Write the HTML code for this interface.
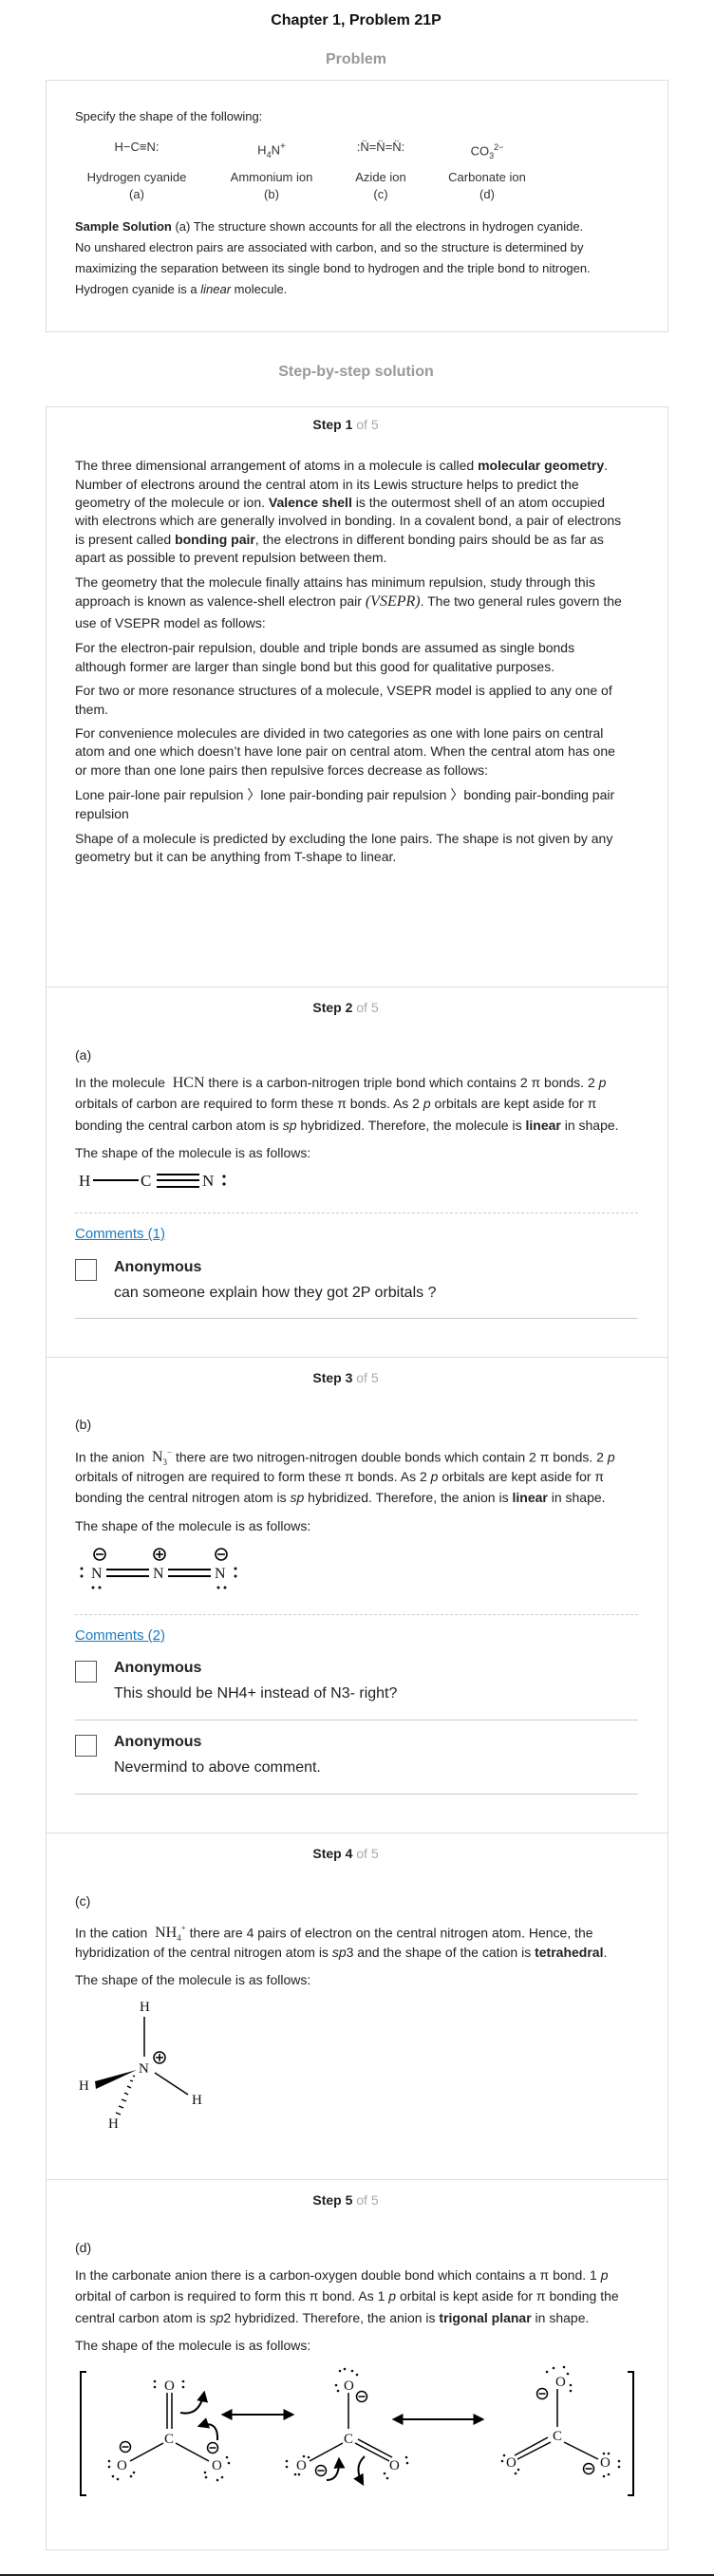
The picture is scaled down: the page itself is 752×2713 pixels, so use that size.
<!DOCTYPE html>
<html><head><meta charset="utf-8">
<style>
*{margin:0;padding:0;box-sizing:border-box}
body{width:752px;height:2713px;position:relative;background:#fff;font-family:"Liberation Sans",Arial,sans-serif;color:#222;overflow:hidden}
.a{position:absolute;white-space:nowrap}
.c{position:absolute;transform:translateX(-50%);white-space:nowrap;text-align:center}
.l{position:absolute;left:79px;white-space:nowrap;font-size:14px;line-height:20px;color:#222}
.p{position:absolute;left:79px;white-space:nowrap;font-size:13px;line-height:20px;color:#222}
.box{position:absolute;left:48px;width:656px;border:1px solid #ddd}
.div{position:absolute;left:48px;width:656px;height:0;border-top:1px solid #ddd}
.st{position:absolute;left:364px;transform:translateX(-50%);font-size:14px;font-weight:bold;line-height:20px;white-space:nowrap}
.st span{font-weight:normal;color:#aaa}
.dash{position:absolute;left:79px;width:593px;border-top:1px dashed #ccc}
.hr{position:absolute;left:79px;width:593px;border-top:1px solid #ccc}
.cm{position:absolute;left:79px;font-size:15px;color:#1a7cc0;text-decoration:underline;line-height:20px}
.cb{position:absolute;left:79px;width:23px;height:23px;border:1px solid #555}
.an{position:absolute;left:120px;font-size:16px;font-weight:bold;line-height:20px}
.ct{position:absolute;left:120px;font-size:16px;line-height:20px;white-space:nowrap}
.s{font-family:"Liberation Serif",serif;font-size:16px}
.mol{font-size:13px;color:#333;line-height:18px}
</style></head><body>

<div class="c" style="left:375px;top:12px;font-size:16px;font-weight:bold;line-height:20px;color:#111">Chapter 1, Problem 21P</div>
<div class="c" style="left:375px;top:53px;font-size:16px;font-weight:bold;line-height:20px;color:#999">Problem</div>

<div class="box" style="top:84px;height:266px"></div>
<div class="p" style="top:113px">Specify the shape of the following:</div>
<div class="c mol" style="left:144px;top:146px">H−C≡N:</div>
<div class="c mol" style="left:286px;top:146px">H<sub style="font-size:9px">4</sub>N<sup style="font-size:10px">+</sup></div>
<div class="c mol" style="left:401px;top:146px">:N̈=N̈=N̈:</div>
<div class="c mol" style="left:513px;top:146px">CO<sub style="font-size:9px">3</sub><sup style="font-size:9px">2−</sup></div>
<div class="c mol" style="left:144px;top:178px">Hydrogen cyanide<br>(a)</div>
<div class="c mol" style="left:286px;top:178px">Ammonium ion<br>(b)</div>
<div class="c mol" style="left:401px;top:178px">Azide ion<br>(c)</div>
<div class="c mol" style="left:513px;top:178px">Carbonate ion<br>(d)</div>
<div class="p" style="top:229px"><b>Sample Solution</b> (a) The structure shown accounts for all the electrons in hydrogen cyanide.</div>
<div class="p" style="top:251px">No unshared electron pairs are associated with carbon, and so the structure is determined by</div>
<div class="p" style="top:273px">maximizing the separation between its single bond to hydrogen and the triple bond to nitrogen.</div>
<div class="p" style="top:295px">Hydrogen cyanide is a <i>linear</i> molecule.</div>

<div class="c" style="left:375px;top:382px;font-size:16px;font-weight:bold;line-height:20px;color:#999">Step-by-step solution</div>

<div class="box" style="top:428px;height:2258px"></div>
<div class="div" style="top:1039px"></div>
<div class="div" style="top:1429px"></div>
<div class="div" style="top:1930px"></div>
<div class="div" style="top:2295px"></div>

<!-- Step 1 -->
<div class="st" style="top:437px">Step 1 <span>of 5</span></div>
<div class="l" style="top:480px">The three dimensional arrangement of atoms in a molecule is called <b>molecular geometry</b>.</div>
<div class="l" style="top:500px">Number of electrons around the central atom in its Lewis structure helps to predict the</div>
<div class="l" style="top:519px">geometry of the molecule or ion. <b>Valence shell</b> is the outermost shell of an atom occupied</div>
<div class="l" style="top:538px">with electrons which are generally involved in bonding. In a covalent bond, a pair of electrons</div>
<div class="l" style="top:558px">is present called <b>bonding pair</b>, the electrons in different bonding pairs should be as far as</div>
<div class="l" style="top:577px">apart as possible to prevent repulsion between them.</div>
<div class="l" style="top:603px">The geometry that the molecule finally attains has minimum repulsion, study through this</div>
<div class="l" style="top:623px">approach is known as valence-shell electron pair <span class="s"><i>(VSEPR)</i></span>. The two general rules govern the</div>
<div class="l" style="top:646px">use of VSEPR model as follows:</div>
<div class="l" style="top:672px">For the electron-pair repulsion, double and triple bonds are assumed as single bonds</div>
<div class="l" style="top:692px">although former are larger than single bond but this good for qualitative purposes.</div>
<div class="l" style="top:717px">For two or more resonance structures of a molecule, VSEPR model is applied to any one of</div>
<div class="l" style="top:737px">them.</div>
<div class="l" style="top:762px">For convenience molecules are divided in two categories as one with lone pairs on central</div>
<div class="l" style="top:781px">atom and one which doesn’t have lone pair on central atom. When the central atom has one</div>
<div class="l" style="top:801px">or more than one lone pairs then repulsive forces decrease as follows:</div>
<div class="l" style="top:827px">Lone pair-lone pair repulsion 〉lone pair-bonding pair repulsion 〉bonding pair-bonding pair</div>
<div class="l" style="top:847px">repulsion</div>
<div class="l" style="top:873px">Shape of a molecule is predicted by excluding the lone pairs. The shape is not given by any</div>
<div class="l" style="top:892px">geometry but it can be anything from T-shape to linear.</div>

<!-- Step 2 -->
<div class="st" style="top:1051px">Step 2 <span>of 5</span></div>
<div class="l" style="top:1101px">(a)</div>
<div class="l" style="top:1130px">In the molecule &nbsp;<span class="s">HCN</span> there is a carbon-nitrogen triple bond which contains 2 π bonds. 2 <i>p</i></div>
<div class="l" style="top:1152px">orbitals of carbon are required to form these π bonds. As 2 <i>p</i> orbitals are kept aside for π</div>
<div class="l" style="top:1175px">bonding the central carbon atom is <i>sp</i> hybridized. Therefore, the molecule is <b>linear</b> in shape.</div>
<div class="l" style="top:1204px">The shape of the molecule is as follows:</div>
<div class="dash" style="top:1277px"></div>
<div class="cm" style="top:1290px">Comments (1)</div>
<div class="cb" style="top:1326px"></div>
<div class="an" style="top:1325px">Anonymous</div>
<div class="ct" style="top:1352px">can someone explain how they got 2P orbitals ?</div>
<div class="hr" style="top:1388px"></div>

<!-- Step 3 -->
<div class="st" style="top:1441px">Step 3 <span>of 5</span></div>
<div class="l" style="top:1490px">(b)</div>
<div class="l" style="top:1520px">In the anion &nbsp;<span class="s">N<sub style="font-size:9px">3</sub><sup style="font-size:9px">−</sup></span> there are two nitrogen-nitrogen double bonds which contain 2 π bonds. 2 <i>p</i></div>
<div class="l" style="top:1545px">orbitals of nitrogen are required to form these π bonds. As 2 <i>p</i> orbitals are kept aside for π</div>
<div class="l" style="top:1567px">bonding the central nitrogen atom is <i>sp</i> hybridized. Therefore, the anion is <b>linear</b> in shape.</div>
<div class="l" style="top:1597px">The shape of the molecule is as follows:</div>
<div class="dash" style="top:1700px"></div>
<div class="cm" style="top:1713px">Comments (2)</div>
<div class="cb" style="top:1749px"></div>
<div class="an" style="top:1747px">Anonymous</div>
<div class="ct" style="top:1774px">This should be NH4+ instead of N3- right?</div>
<div class="hr" style="top:1811px"></div>
<div class="cb" style="top:1827px"></div>
<div class="an" style="top:1825px">Anonymous</div>
<div class="ct" style="top:1852px">Nevermind to above comment.</div>
<div class="hr" style="top:1889px"></div>

<!-- Step 4 -->
<div class="st" style="top:1942px">Step 4 <span>of 5</span></div>
<div class="l" style="top:1992px">(c)</div>
<div class="l" style="top:2021px">In the cation &nbsp;<span class="s">NH<sub style="font-size:9px">4</sub><sup style="font-size:9px">+</sup></span> there are 4 pairs of electron on the central nitrogen atom. Hence, the</div>
<div class="l" style="top:2046px">hybridization of the central nitrogen atom is <i>sp</i>3 and the shape of the cation is <b>tetrahedral</b>.</div>
<div class="l" style="top:2075px">The shape of the molecule is as follows:</div>

<!-- Step 5 -->
<div class="st" style="top:2307px">Step 5 <span>of 5</span></div>
<div class="l" style="top:2357px">(d)</div>
<div class="l" style="top:2386px">In the carbonate anion there is a carbon-oxygen double bond which contains a π bond. 1 <i>p</i></div>
<div class="l" style="top:2408px">orbital of carbon is required to form this π bond. As 1 <i>p</i> orbital is kept aside for π bonding the</div>
<div class="l" style="top:2431px">central carbon atom is <i>sp</i>2 hybridized. Therefore, the anion is <b>trigonal planar</b> in shape.</div>
<div class="l" style="top:2460px">The shape of the molecule is as follows:</div>

<div style="position:absolute;left:0;top:2711px;width:752px;height:2px;background:#222"></div>

<svg class="a" style="left:0;top:0" width="752" height="2713" viewBox="0 0 752 2713" font-family="Liberation Serif,serif" font-size="17" fill="#111" stroke="none">
<defs><marker id="ah" viewBox="0 0 10 10" refX="8" refY="5" markerWidth="6" markerHeight="6" orient="auto-start-reverse"><path d="M0,0 L10,5 L0,10 z" fill="#000"/></marker></defs>
<!-- HCN -->
<text x="83" y="1249">H</text>
<line x1="98" y1="1243" x2="146" y2="1243" stroke="#000" stroke-width="2"/>
<text x="148" y="1249">C</text>
<g stroke="#000" stroke-width="2"><line x1="165" y1="1237" x2="210" y2="1237"/><line x1="165" y1="1243" x2="210" y2="1243"/><line x1="165" y1="1250" x2="210" y2="1250"/></g>
<text x="213" y="1249">N</text>
<circle cx="236" cy="1239" r="1.6"/><circle cx="236" cy="1247" r="1.6"/>
<!-- N3 -->
<g font-size="16">
<text x="96" y="1662">N</text><text x="161" y="1662">N</text><text x="226" y="1662">N</text>
</g>
<circle cx="86" cy="1652" r="1.5"/><circle cx="86" cy="1660" r="1.5"/>
<circle cx="248" cy="1652" r="1.5"/><circle cx="248" cy="1660" r="1.5"/>
<circle cx="98" cy="1672" r="1.5"/><circle cx="105" cy="1672" r="1.5"/>
<circle cx="230" cy="1672" r="1.5"/><circle cx="237" cy="1672" r="1.5"/>
<g stroke="#000" stroke-width="2"><line x1="112" y1="1653" x2="157" y2="1653"/><line x1="112" y1="1660" x2="157" y2="1660"/><line x1="177" y1="1653" x2="222" y2="1653"/><line x1="177" y1="1660" x2="222" y2="1660"/></g>
<g stroke="#000" stroke-width="1.6" fill="none">
<circle cx="105" cy="1637" r="6"/><line x1="101" y1="1637" x2="109" y2="1637"/>
<circle cx="168" cy="1637" r="6"/><line x1="164" y1="1637" x2="172" y2="1637"/><line x1="168" y1="1633" x2="168" y2="1641"/>
<circle cx="233" cy="1637" r="6"/><line x1="229" y1="1637" x2="237" y2="1637"/>
</g>
<!-- NH4 -->
<g font-size="15">
<text x="147" y="2118">H</text><text x="146" y="2183">N</text><text x="83" y="2201">H</text><text x="202" y="2216">H</text><text x="114" y="2241">H</text>
</g>
<line x1="152" y1="2124" x2="152" y2="2166" stroke="#000" stroke-width="1.5"/>
<line x1="163" y1="2183" x2="198" y2="2206" stroke="#000" stroke-width="1.5"/>
<path d="M100,2192 L144,2180 L101,2200 z" fill="#000"/>
<g stroke="#000" stroke-width="1.4"><line x1="122" y1="2225" x2="127" y2="2227"/><line x1="125" y1="2218" x2="130" y2="2220"/><line x1="128" y1="2211" x2="133" y2="2213"/><line x1="131" y1="2204" x2="135" y2="2206"/><line x1="134" y1="2197" x2="138" y2="2199"/><line x1="137" y1="2191" x2="140" y2="2192"/><line x1="140" y1="2186" x2="142" y2="2187"/></g>
<g stroke="#000" stroke-width="1.5" fill="none"><circle cx="168" cy="2167" r="6"/><line x1="164" y1="2167" x2="172" y2="2167"/><line x1="168" y1="2163" x2="168" y2="2171"/></g>
<!-- carbonate brackets -->
<path d="M91,2498 L85,2498 L85,2628 L91,2628" stroke="#000" stroke-width="2" fill="none"/>
<path d="M661,2498 L667,2498 L667,2628 L661,2628" stroke="#000" stroke-width="2" fill="none"/>
<g font-size="15">
<text x="173" y="2517">O</text><text x="173" y="2573">C</text><text x="123" y="2601">O</text><text x="223" y="2601">O</text>
<text x="362" y="2517">O</text><text x="362" y="2573">C</text><text x="312" y="2601">O</text><text x="410" y="2601">O</text>
<text x="585" y="2513">O</text><text x="582" y="2570">C</text><text x="533" y="2598">O</text><text x="632" y="2598">O</text>
</g>
<g stroke="#000" stroke-width="1.5" fill="none">
<line x1="176" y1="2520" x2="176" y2="2558"/><line x1="181" y1="2520" x2="181" y2="2558"/>
<line x1="172" y1="2573" x2="137" y2="2592"/><line x1="185" y1="2573" x2="220" y2="2592"/>
<line x1="367" y1="2520" x2="367" y2="2558"/><line x1="361" y1="2573" x2="326" y2="2592"/>
<line x1="374" y1="2573" x2="410" y2="2592"/><line x1="377" y1="2569" x2="413" y2="2588"/>
<line x1="587" y1="2516" x2="587" y2="2556"/><line x1="594" y1="2572" x2="630" y2="2590"/>
<line x1="580" y1="2572" x2="545" y2="2590"/><line x1="577" y1="2567" x2="542" y2="2586"/>
<line x1="235" y1="2543" x2="308" y2="2543" stroke-width="2" marker-start="url(#ah)" marker-end="url(#ah)"/>
<line x1="415" y1="2548" x2="508" y2="2548" stroke-width="2" marker-start="url(#ah)" marker-end="url(#ah)"/>
<path d="M190,2541 Q210,2545 215,2520" stroke-width="2" marker-end="url(#ah)"/>
<path d="M229,2570 Q230,2548 210,2555" stroke-width="2" marker-end="url(#ah)"/>
<path d="M344,2612 Q358,2612 357,2590" stroke-width="2" marker-end="url(#ah)"/>
<path d="M384,2587 Q372,2598 382,2616" stroke-width="2" marker-end="url(#ah)"/>
<circle cx="132" cy="2577" r="5.5"/><line x1="128.5" y1="2577" x2="135.5" y2="2577"/>
<circle cx="224" cy="2578" r="5.5"/><line x1="220.5" y1="2578" x2="227.5" y2="2578"/>
<circle cx="381" cy="2524" r="5.5"/><line x1="377.5" y1="2524" x2="384.5" y2="2524"/>
<circle cx="338" cy="2602" r="5.5"/><line x1="334.5" y1="2602" x2="341.5" y2="2602"/>
<circle cx="571" cy="2521" r="5.5"/><line x1="567.5" y1="2521" x2="574.5" y2="2521"/>
<circle cx="620" cy="2600" r="5.5"/><line x1="616.5" y1="2600" x2="623.5" y2="2600"/>
</g>
<g>
<circle cx="163" cy="2508" r="1.3"/><circle cx="163" cy="2514" r="1.3"/><circle cx="193" cy="2508" r="1.3"/><circle cx="193" cy="2514" r="1.3"/>
<circle cx="115" cy="2592" r="1.3"/><circle cx="115" cy="2598" r="1.3"/><circle cx="119" cy="2608" r="1.3"/><circle cx="124" cy="2611" r="1.3"/><circle cx="138" cy="2608" r="1.3"/><circle cx="141" cy="2604" r="1.3"/>
<circle cx="239" cy="2588" r="1.3"/><circle cx="241" cy="2594" r="1.3"/><circle cx="216" cy="2604" r="1.3"/><circle cx="217" cy="2609" r="1.3"/><circle cx="229" cy="2612" r="1.3"/><circle cx="234" cy="2609" r="1.3"/>
<circle cx="358" cy="2497" r="1.3"/><circle cx="363" cy="2495" r="1.3"/><circle cx="371" cy="2497" r="1.3"/><circle cx="376" cy="2501" r="1.3"/><circle cx="354" cy="2512" r="1.3"/><circle cx="356" cy="2518" r="1.3"/>
<circle cx="302" cy="2592" r="1.3"/><circle cx="302" cy="2598" r="1.3"/><circle cx="311" cy="2606" r="1.3"/><circle cx="315" cy="2606" r="1.3"/><circle cx="320" cy="2587" r="1.3"/><circle cx="325" cy="2588" r="1.3"/>
<circle cx="428" cy="2588" r="1.3"/><circle cx="429" cy="2594" r="1.3"/><circle cx="405" cy="2605" r="1.3"/><circle cx="408" cy="2610" r="1.3"/>
<circle cx="576" cy="2498" r="1.3"/><circle cx="583" cy="2494" r="1.3"/><circle cx="594" cy="2493" r="1.3"/><circle cx="598" cy="2500" r="1.3"/><circle cx="601" cy="2512" r="1.3"/><circle cx="601" cy="2518" r="1.3"/>
<circle cx="531" cy="2586" r="1.3"/><circle cx="529" cy="2592" r="1.3"/><circle cx="543" cy="2605" r="1.3"/><circle cx="546" cy="2601" r="1.3"/>
<circle cx="636" cy="2584" r="1.3"/><circle cx="641" cy="2584" r="1.3"/><circle cx="652" cy="2592" r="1.3"/><circle cx="652" cy="2598" r="1.3"/><circle cx="636" cy="2608" r="1.3"/><circle cx="641" cy="2606" r="1.3"/>
</g>
</svg>
</body></html>
